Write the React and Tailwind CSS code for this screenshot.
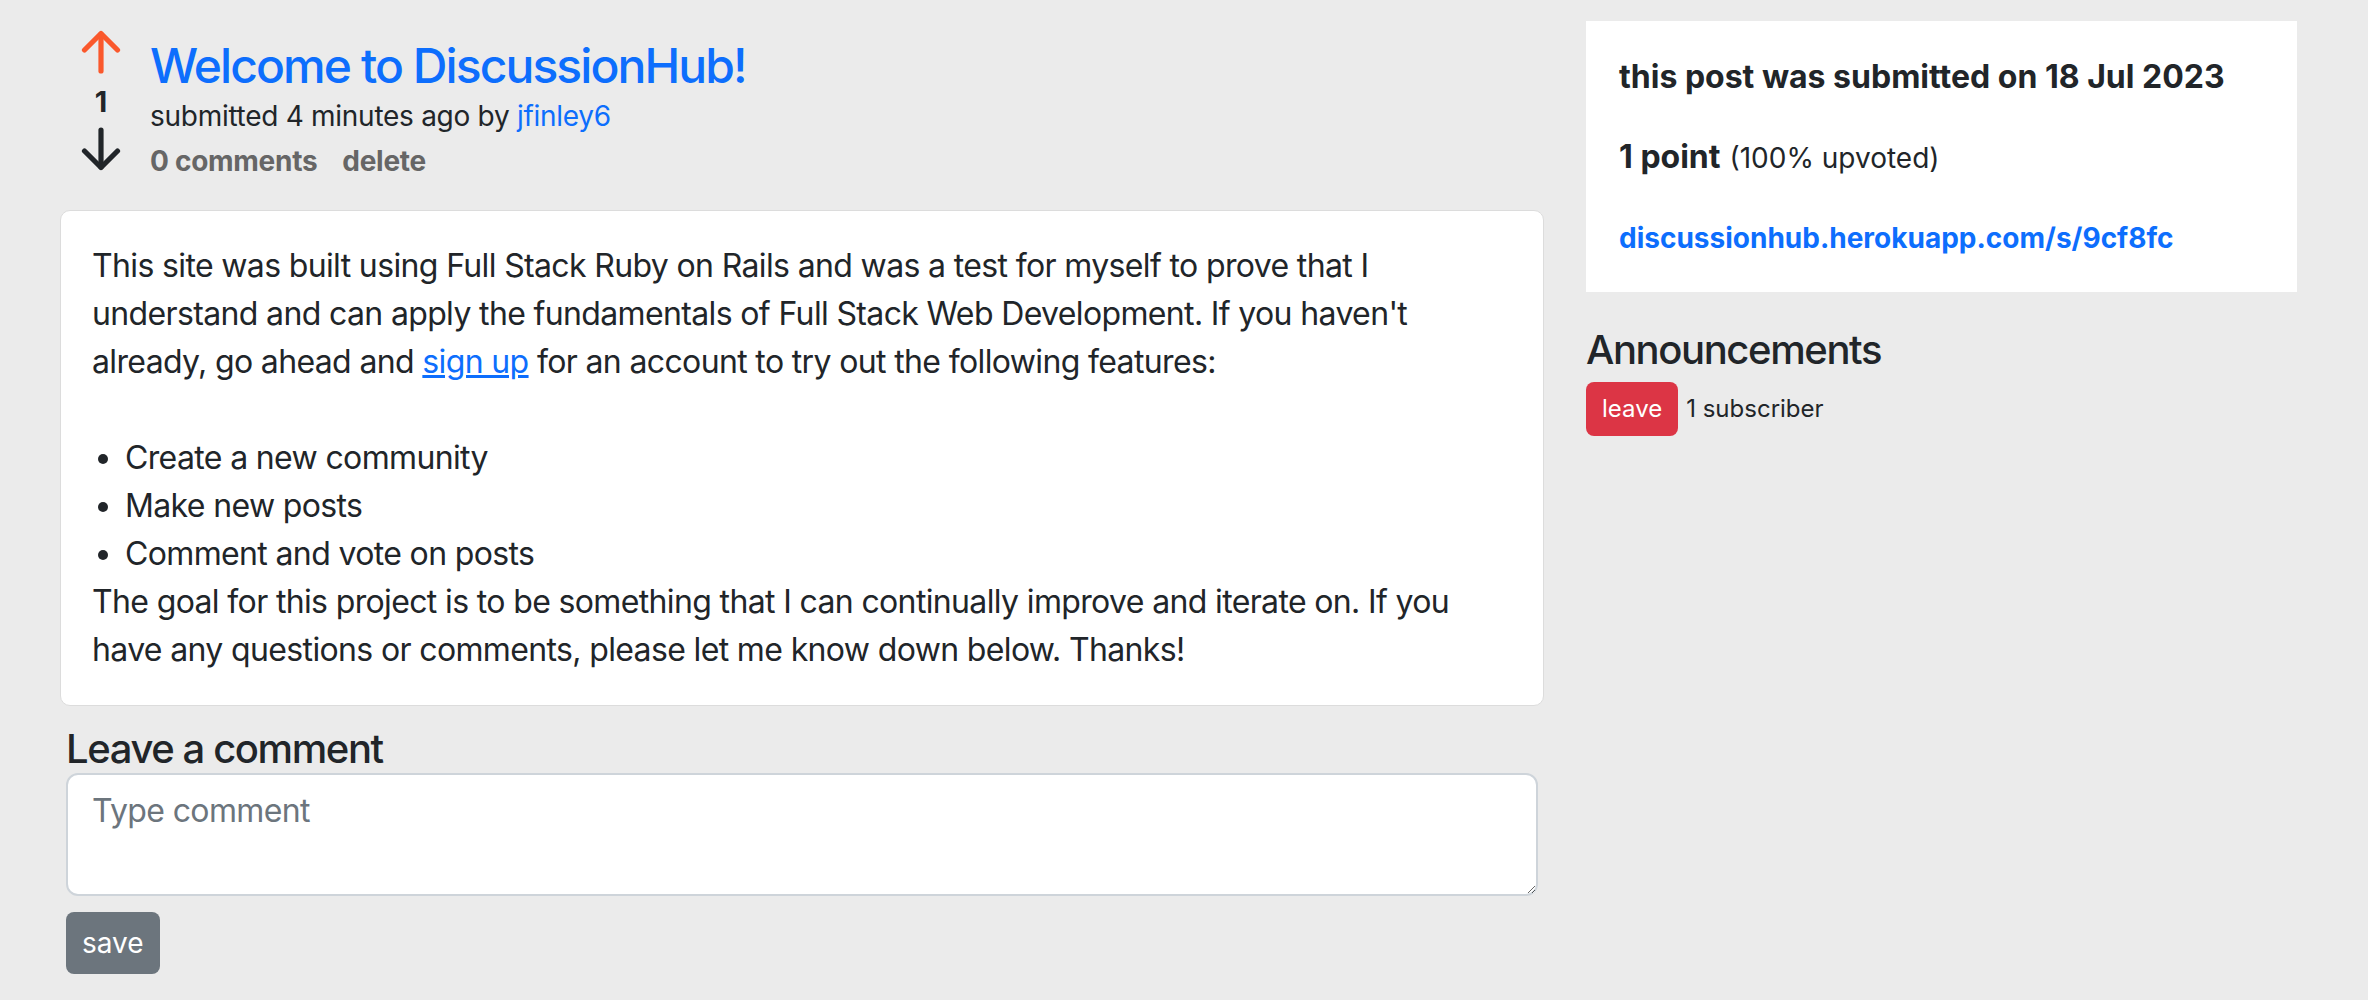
import React from 'react';

// Up / down vote arrows (stroke arrows with round caps)
const VoteArrow = ({ direction, color }) => (
  <svg width="40" height="45" viewBox="0 0 40 45" fill="none" stroke={color} strokeWidth="5.2" strokeLinecap="round" strokeLinejoin="round">
    {direction === 'up' ? (
      <>
        <path d="M20 4 V41" />
        <path d="M3.5 20 L20 3.5 L36.5 20" />
      </>
    ) : (
      <>
        <path d="M20 4 V41" />
        <path d="M3.5 25 L20 41.5 L36.5 25" />
      </>
    )}
  </svg>
);

const App = () => {
  return (
    <div className="min-h-screen bg-[#ebebeb] text-[#212529] font-['Inter','Noto_Sans',sans-serif]">
      <div className="flex gap-[42px] pl-[60px]">

        {/* Main column */}
        <main className="w-[1484px] shrink-0">

          {/* Post header */}
          <div className="flex items-start pt-[30px]">
            <div className="w-[82px] shrink-0 flex flex-col items-center">
              <VoteArrow direction="up" color="#fa582c" />
              <div className="mt-[6px] text-[29px] leading-[42px] font-bold">1</div>
              <div className="mt-[3px]">
                <VoteArrow direction="down" color="#212529" />
              </div>
            </div>
            <div className="ml-[8px] pt-[7px]">
              <h1 className="text-[48px] leading-[58px] font-medium tracking-[-0.04em] text-[#0d6efd]">Welcome to DiscussionHub!</h1>
              <div className="text-[28px] leading-[42px] tracking-[-0.01em]">
                submitted 4 minutes ago by <span className="text-[#0d6efd]">jfinley6</span>
              </div>
              <div className="mt-[3px] flex gap-[25px] text-[28px] leading-[42px] font-bold text-[#666666] tracking-[-0.01em]">
                <span>0 comments</span>
                <span>delete</span>
              </div>
            </div>
          </div>

          {/* Post body */}
          <div className="mt-[28px] bg-white border border-[#dcdcdc] rounded-[10px] p-[31px] text-[32px] leading-[48px] tracking-[-0.02em]">
            <p>
              This site was built using Full Stack Ruby on Rails and was a test for myself to prove that I understand and can apply the fundamentals of Full Stack Web Development. If you haven't already, go ahead and{' '}
              <a className="text-[#0d6efd] underline">sign up</a> for an account to try out the following features:
            </p>
            <div className="h-[48px]"></div>
            <ul className="list-disc pl-[33px]">
              <li>Create a new community</li>
              <li>Make new posts</li>
              <li>Comment and vote on posts</li>
            </ul>
            <p>
              The goal for this project is to be something that I can continually improve and iterate on. If you have any questions or comments, please let me know down below. Thanks!
            </p>
          </div>

          {/* Comment form */}
          <div className="mx-[6px] mt-[19px]">
            <h2 className="text-[40px] leading-[48px] font-medium tracking-[-0.035em]">Leave a comment</h2>
            <textarea
              rows={2}
              placeholder="Type comment"
              className="block w-full h-[123px] bg-white border-2 border-[#ced4da] rounded-[12px] px-[24px] py-[12px] text-[32px] leading-[48px] tracking-[-0.02em] placeholder:text-[#6c757d] outline-none"
            />
            <button className="mt-[16px] h-[62px] px-[16px] rounded-[8px] bg-[#6c757d] text-white text-[28px] leading-[42px]">
              save
            </button>
          </div>
        </main>

        {/* Sidebar */}
        <aside className="w-[711px] shrink-0 pt-[21px]">
          <div className="bg-white px-[33px] pt-[32px] pb-[30px] flex flex-col gap-[32px] text-[32px] leading-[48px]">
            <div className="font-bold">this post was submitted on 18 Jul 2023</div>
            <div>
              <span className="font-bold">1 point</span> <span className="text-[28px]">(100% upvoted)</span>
            </div>
            <div className="font-bold text-[28px] text-[#0d6efd]">discussionhub.herokuapp.com/s/9cf8fc</div>
          </div>
          <h3 className="mt-[34px] text-[40px] leading-[48px] font-medium tracking-[-0.035em]">Announcements</h3>
          <div className="mt-[8px] flex items-center gap-[8px] text-[24px]">
            <button className="h-[54px] px-[16px] rounded-[8px] bg-[#dc3545] text-white text-[24px] leading-[36px]">leave</button>
            <span>1 subscriber</span>
          </div>
        </aside>
      </div>
    </div>
  );
};

export default App;
